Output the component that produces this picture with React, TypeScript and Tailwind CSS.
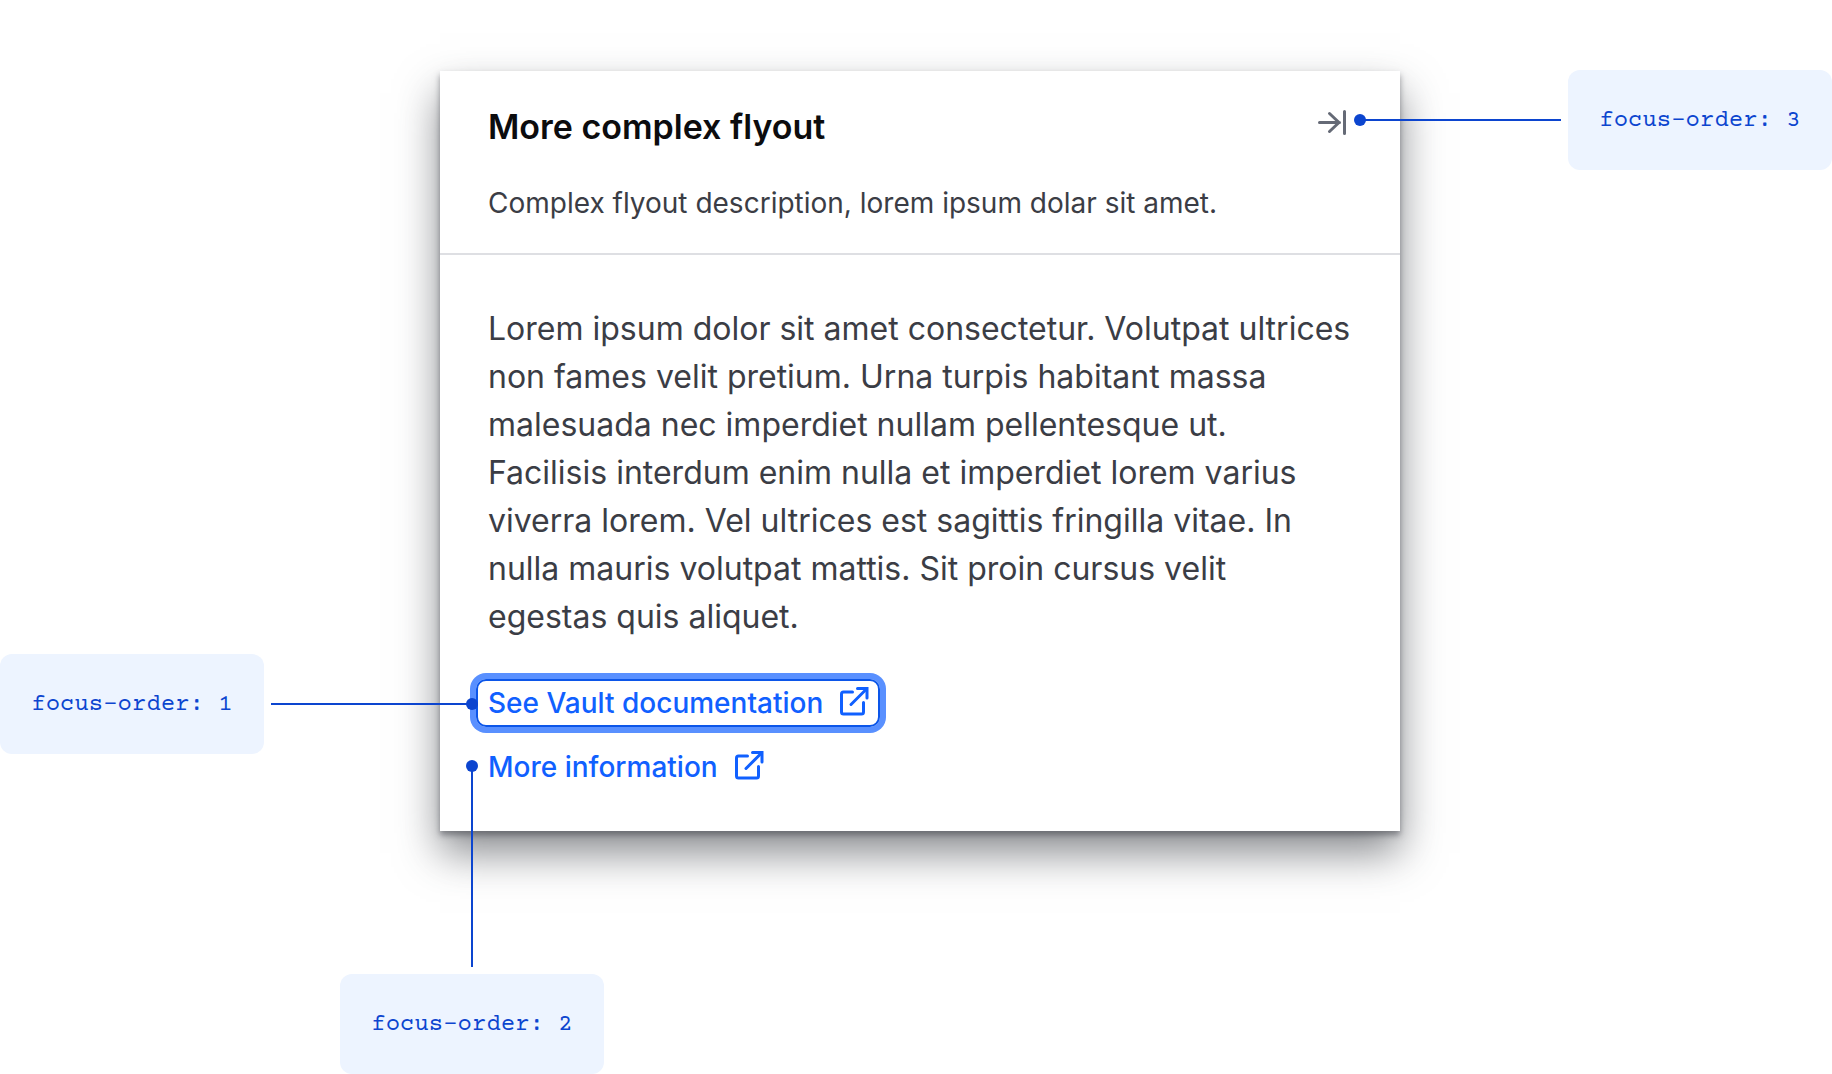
import React from 'react';

function FocusNote({ order, className }: { order: number; className: string }) {
  return (
    <div
      className={`flex h-[100px] w-[264px] items-center justify-center rounded-xl bg-[#edf4ff] pt-0.5 font-['Courier_Prime','Courier_New','Liberation_Mono',monospace] text-2xl whitespace-nowrap text-[#0c45cf] ${className}`}
    >
      focus-order: {order}
    </div>
  );
}

function ExternalLinkIcon() {
  return (
    <svg
      viewBox="0 0 32 32"
      className="size-8 shrink-0 overflow-visible"
      fill="none"
      stroke="currentColor"
      strokeWidth="3"
      strokeLinecap="round"
      strokeLinejoin="round"
      aria-hidden="true"
    >
      <path d="M14.500 5H5.500a2 2 0 0 0-2 2v18a2 2 0 0 0 2 2h18a2 2 0 0 0 2-2V15.500" />
      <path d="M19.500 1.500H29v9.500" strokeLinejoin="miter" />
      <path d="M28.500 2 13 17.500" />
    </svg>
  );
}

function DismissIcon() {
  return (
    <svg
      viewBox="0 0 32 32"
      className="size-8"
      fill="none"
      stroke="currentColor"
      strokeWidth="3"
      strokeLinecap="round"
      strokeLinejoin="round"
      aria-hidden="true"
    >
      <path d="M28.500 5.500v22M3.500 16.500h20M13.500 7.500l9.500 9-9.500 9" />
    </svg>
  );
}

const linkClass =
  'relative inline-flex h-12 items-center gap-[15px] rounded-[10px] pr-[10px] pl-3 text-[28px] font-medium whitespace-nowrap text-[#1060ff]';

export default function App() {
  return (
    <main className="grid min-h-screen grid-cols-[264px_minmax(0,1fr)_264px] items-start bg-white pt-[70px] font-['Inter',sans-serif]">
      <FocusNote order={1} className="mt-[584px]" />

      <div className="relative">
        <section
          aria-labelledby="flyout-title"
          className="mt-px mr-[168px] ml-[176px] bg-white pb-10 shadow-[0_4px_6px_rgba(59,61,69,0.5),0_22px_40px_rgba(59,61,69,0.6)]"
        >
          <header className="border-b-2 border-[#dedfe3] px-12 pt-8 pb-[26px]">
            <div className="flex items-start justify-between">
              <h1 id="flyout-title" className="text-[34px] leading-[48px] font-semibold text-[#0c0c0e]">
                More complex flyout
              </h1>
              <button type="button" aria-label="Dismiss" className="mt-[3px] mr-1 text-[#656a76]">
                <DismissIcon />
              </button>
            </div>
            <p className="mt-7 text-[28px] leading-[48px] text-[#3b3d45]">
              Complex flyout description, lorem ipsum dolar sit amet.
            </p>
          </header>
          <div className="px-12 pt-[50px]">
            <p className="text-[32px] leading-[48px] text-[#3b3d45]">
              Lorem ipsum dolor sit amet consectetur. Volutpat ultrices non fames velit pretium. Urna
              turpis habitant massa malesuada nec imperdiet nullam pellentesque ut. Facilisis interdum
              enim nulla et imperdiet lorem varius viverra lorem. Vel ultrices est sagittis fringilla
              vitae. In nulla mauris volutpat mattis. Sit proin cursus velit egestas quis aliquet.
            </p>
            <div className="-mx-3 mt-[38px] flex flex-col items-start gap-4">
              <a
                href="#vault"
                className={`${linkClass} shadow-[inset_0_0_0_2px_#0c56e9,0_0_0_6px_#5990ff]`}
              >
                See Vault documentation
                <ExternalLinkIcon />
              </a>
              <a href="#more" className={linkClass}>
                More information
                <ExternalLinkIcon />
              </a>
            </div>
          </div>
        </section>

        <div aria-hidden="true" className="absolute top-[633px] left-[7px] h-0.5 w-[201px] bg-[#0c45cf]">
          <span className="absolute -top-[5px] -right-1.5 size-3 rounded-full bg-[#0c45cf]" />
        </div>
        <div aria-hidden="true" className="absolute top-[696px] left-[207px] h-[201px] w-0.5 bg-[#0c45cf]">
          <span className="absolute -top-1.5 -left-[5px] size-3 rounded-full bg-[#0c45cf]" />
        </div>
        <div aria-hidden="true" className="absolute top-[49px] right-[7px] h-0.5 w-[201px] bg-[#0c45cf]">
          <span className="absolute -top-[5px] -left-1.5 size-3 rounded-full bg-[#0c45cf]" />
        </div>

        <FocusNote order={2} className="mt-[143px] ml-[76px]" />
      </div>

      <FocusNote order={3} className="" />
    </main>
  );
}
